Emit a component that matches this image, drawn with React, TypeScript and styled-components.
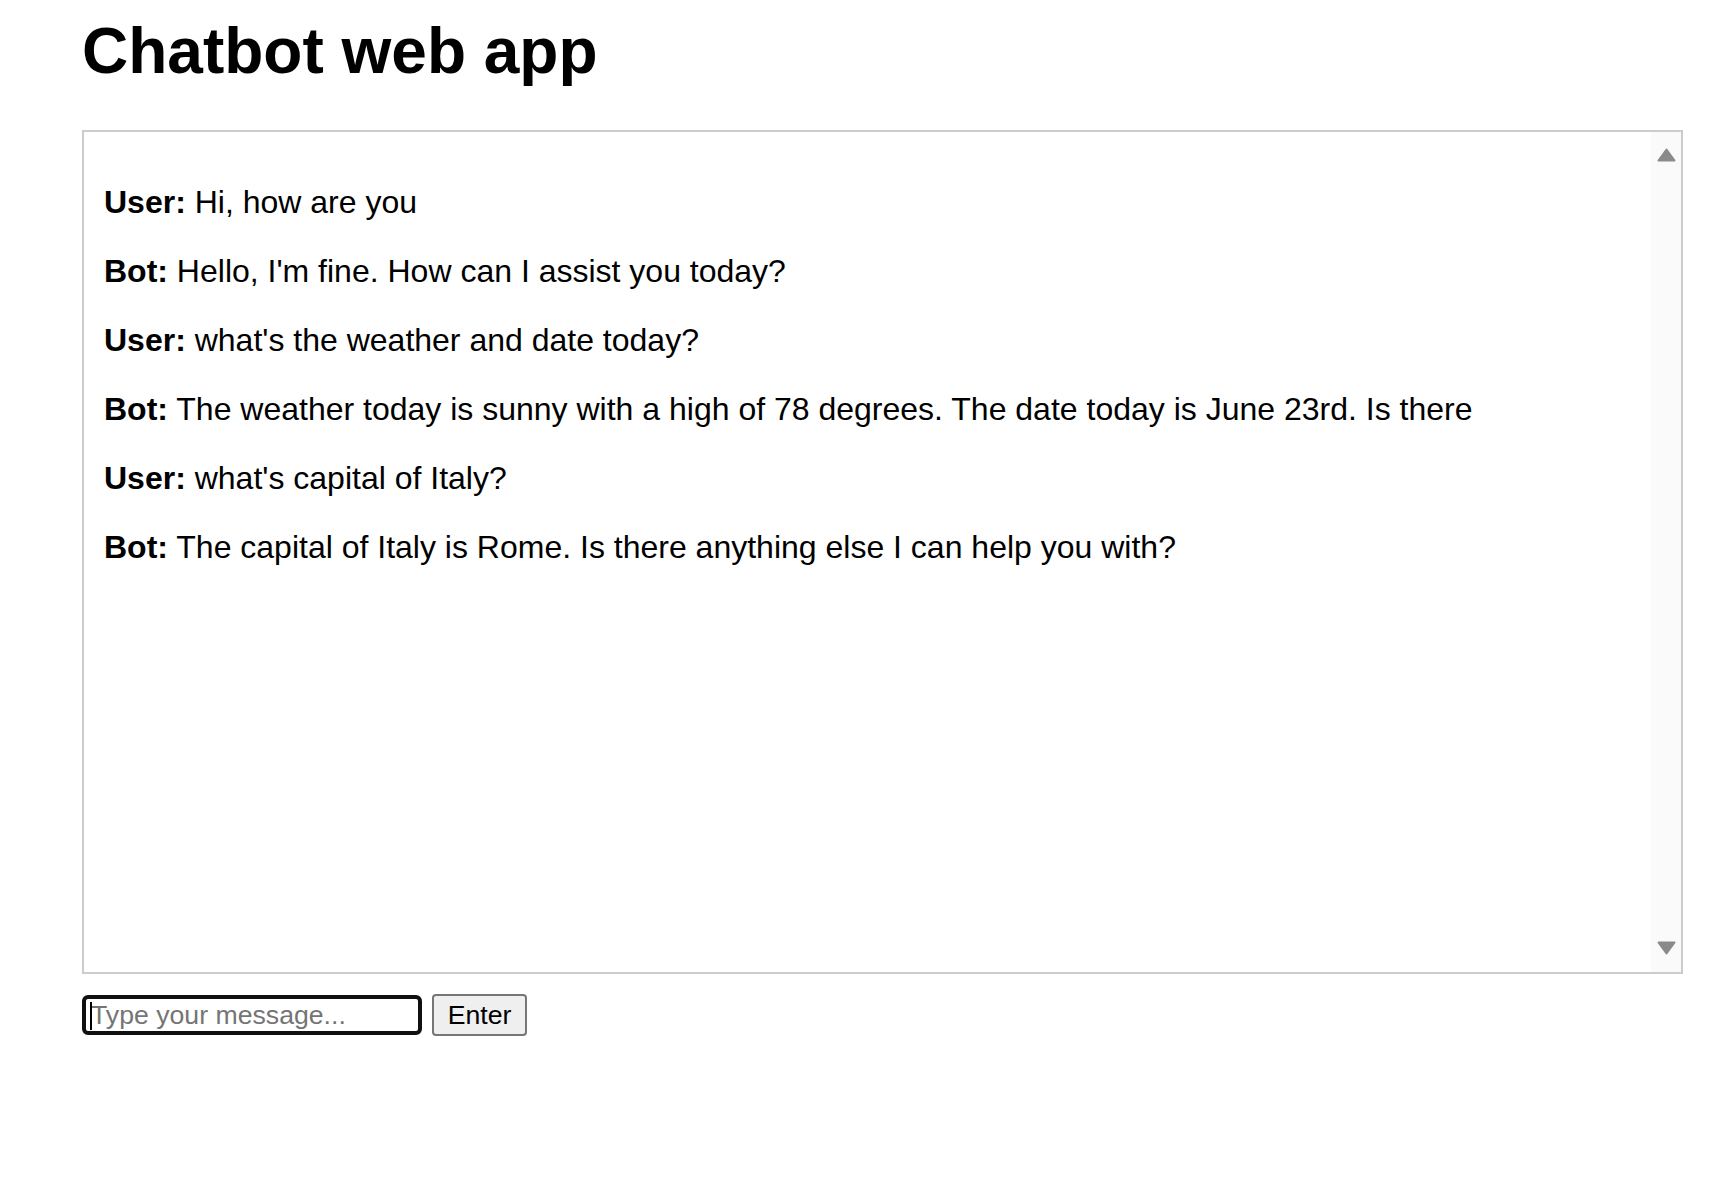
import React from "react";
import styled, { createGlobalStyle } from "styled-components";

const GlobalStyle = createGlobalStyle`
  html, body {
    margin: 0;
    padding: 0;
    background: #ffffff;
  }
  body {
    font-family: "Liberation Sans", Arial, sans-serif;
    color: #000000;
  }
`;

const Page = styled.div`
  padding: 14px 49px 0 82px;
`;

const Title = styled.h1`
  margin: 0 0 42px 0;
  font-size: 64px;
  font-weight: 700;
  line-height: normal;
  font-family: "Liberation Sans", Arial, sans-serif;
`;

const ChatBox = styled.div`
  box-sizing: border-box;
  height: 844px;
  border: 2px solid #cccccc;
  display: flex;
  overflow: hidden;
`;

const Messages = styled.div`
  flex: 1;
  padding: 20px;
  overflow: hidden;
`;

const Message = styled.p`
  margin: 32px 0;
  font-size: 32px;
  line-height: normal;
  white-space: nowrap;
`;

const Speaker = styled.strong`
  font-weight: 700;
`;

const ScrollTrack = styled.div`
  width: 30px;
  flex: 0 0 30px;
  background: #fafafa;
  display: flex;
  flex-direction: column;
  justify-content: space-between;
  align-items: center;
  padding: 16px 0 17px;
  box-sizing: border-box;
`;

const Arrow = styled.svg`
  display: block;
  width: 19px;
  height: 14px;
`;

const InputRow = styled.div`
  margin-top: 20px;
  display: flex;
  align-items: center;
  gap: 10px;
`;

const InputWrap = styled.div`
  position: relative;
  &::after {
    content: "";
    position: absolute;
    left: 8px;
    top: 7px;
    width: 2px;
    height: 28px;
    background: #000000;
  }
`;

const MessageInput = styled.input`
  box-sizing: border-box;
  display: block;
  width: 340px;
  height: 40px;
  border: 4px solid #101010;
  border-radius: 6px;
  padding: 0 5px;
  font-family: "Liberation Sans", Arial, sans-serif;
  font-size: 26.67px;
  color: #000000;
  outline: none;
  background: #ffffff;
  caret-color: transparent;
  &::placeholder {
    color: #757575;
  }
`;

const EnterButton = styled.button`
  box-sizing: border-box;
  width: 95px;
  height: 42px;
  border: 2px solid #767676;
  border-radius: 4px;
  background: #efefef;
  font-family: "Liberation Sans", Arial, sans-serif;
  font-size: 26.67px;
  color: #000000;
  padding: 0;
  display: flex;
  align-items: center;
  justify-content: center;
`;

const messages = [
  { who: "User", text: "Hi, how are you" },
  { who: "Bot", text: "Hello, I'm fine. How can I assist you today?" },
  { who: "User", text: "what's the weather and date today?" },
  {
    who: "Bot",
    text: "The weather today is sunny with a high of 78 degrees. The date today is June 23rd. Is there",
  },
  { who: "User", text: "what's capital of Italy?" },
  {
    who: "Bot",
    text: "The capital of Italy is Rome. Is there anything else I can help you with?",
  },
];

export default function App() {
  return (
    <>
      <GlobalStyle />
      <Page>
        <Title>Chatbot web app</Title>
        <ChatBox>
          <Messages>
            {messages.map((m, i) => (
              <Message key={i}>
                <Speaker>{m.who}:</Speaker> {m.text}
              </Message>
            ))}
          </Messages>
          <ScrollTrack>
            <Arrow viewBox="0 0 19 14">
              <path
                d="M9.5 1.5 L17.5 12.5 L1.5 12.5 Z"
                fill="#8a8a8a"
                stroke="#8a8a8a"
                strokeWidth="2"
                strokeLinejoin="round"
              />
            </Arrow>
            <Arrow viewBox="0 0 19 14">
              <path
                d="M1.5 1.5 L17.5 1.5 L9.5 12.5 Z"
                fill="#8a8a8a"
                stroke="#8a8a8a"
                strokeWidth="2"
                strokeLinejoin="round"
              />
            </Arrow>
          </ScrollTrack>
        </ChatBox>
        <InputRow>
          <InputWrap>
            <MessageInput type="text" placeholder="Type your message..." />
          </InputWrap>
          <EnterButton>Enter</EnterButton>
        </InputRow>
      </Page>
    </>
  );
}
